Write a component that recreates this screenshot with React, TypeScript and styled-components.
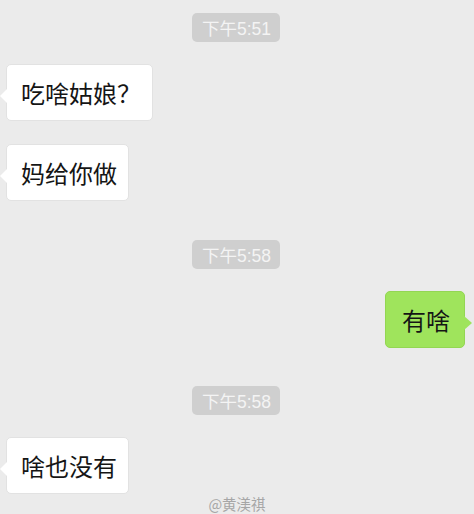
import { FC } from "react";
import styled, { createGlobalStyle } from "styled-components";

const GlobalStyle = createGlobalStyle`
  html, body {
    margin: 0;
    padding: 0;
    background: #ebebeb;
  }
  body {
    font-family: "Liberation Sans", "Noto Sans CJK SC", sans-serif;
  }
`;

const Chat = styled.div`
  width: 474px;
  height: 514px;
  box-sizing: border-box;
  display: flex;
  flex-direction: column;
  overflow: hidden;
  background: #ebebeb;
`;

const TimeRow = styled.div<{ $top: number }>`
  display: flex;
  justify-content: center;
  margin-top: ${(p) => p.$top}px;
  padding-right: 2px;
`;

const TimePill = styled.div`
  height: 29px;
  padding: 0 9px 0 10px;
  display: flex;
  align-items: center;
  border-radius: 5px;
  background: #cfcfcf;
  color: #f4f4f4;
  font-size: 17.5px;
`;

const MsgRow = styled.div<{ $top: number; $mine?: boolean }>`
  display: flex;
  justify-content: ${(p) => (p.$mine ? "flex-end" : "flex-start")};
  margin-top: ${(p) => p.$top}px;
  padding: ${(p) => (p.$mine ? "0 9px 0 0" : "0 0 0 6px")};
`;

const Bubble = styled.div<{ $mine?: boolean }>`
  position: relative;
  height: 57px;
  box-sizing: border-box;
  padding: ${(p) => (p.$mine ? "0 14px 0 16px" : "0 11px 0 14px")};
  display: flex;
  align-items: center;
  border-radius: 5px;
  background: ${(p) => (p.$mine ? "#9fe45c" : "#ffffff")};
  border: 1px solid ${(p) => (p.$mine ? "#93d653" : "#e2e2e2")};
  color: #151515;
  font-family: "Noto Sans CJK SC", sans-serif;
  font-size: 24px;

  &::before {
    content: "";
    position: absolute;
    top: 24px;
    ${(p) => (p.$mine ? "right: -8px;" : "left: -7px;")}
    border-top: 7px solid transparent;
    border-bottom: 7px solid transparent;
    ${(p) =>
      p.$mine
        ? "border-left: 8px solid #9fe45c;"
        : "border-right: 7px solid #ffffff;"}
  }
`;

const Watermark = styled.div`
  margin-top: 1px;
  text-align: center;
  color: #a6a6a6;
  font-family: "Noto Sans CJK SC", sans-serif;
  font-size: 14.5px;
  line-height: 17px;
`;

const App: FC = () => {
  return (
    <>
      <GlobalStyle />
      <Chat>
        <TimeRow $top={13}>
          <TimePill>下午5:51</TimePill>
        </TimeRow>
        <MsgRow $top={22}>
          <Bubble>吃啥姑娘？</Bubble>
        </MsgRow>
        <MsgRow $top={23}>
          <Bubble>妈给你做</Bubble>
        </MsgRow>
        <TimeRow $top={39}>
          <TimePill>下午5:58</TimePill>
        </TimeRow>
        <MsgRow $top={22} $mine>
          <Bubble $mine>有啥</Bubble>
        </MsgRow>
        <TimeRow $top={38}>
          <TimePill>下午5:58</TimePill>
        </TimeRow>
        <MsgRow $top={22}>
          <Bubble>啥也没有</Bubble>
        </MsgRow>
        <Watermark>@黄渼祺</Watermark>
      </Chat>
    </>
  );
};

export default App;
